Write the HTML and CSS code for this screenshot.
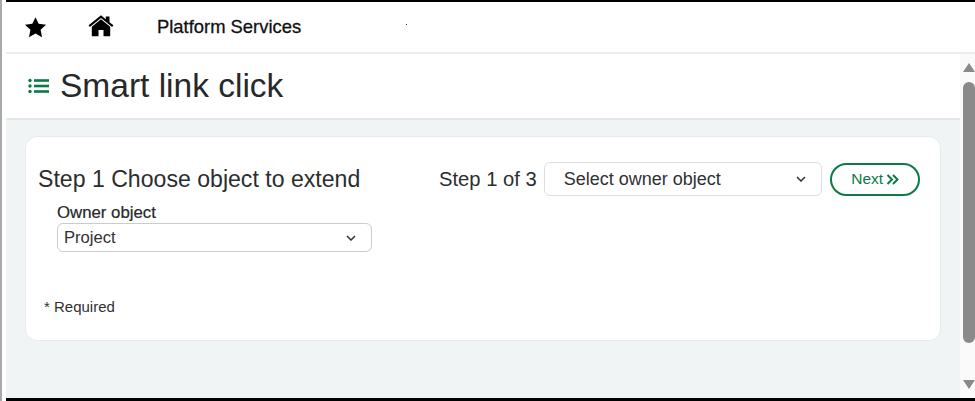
FILE: index.html
```html
<!DOCTYPE html>
<html lang="en">
<head>
<meta charset="utf-8">
<title>Smart link click</title>
<link rel="stylesheet" href="styles.css">
</head>
<body>
<div class="frame">
  <header class="topbar">
    <svg class="star" viewBox="0 0 24 24" aria-hidden="true"><path d="M12 1.200l3.300 7 7.700.9-5.700 5.300 1.500 7.700L12 18.300l-6.800 3.800 1.500-7.700L1 9.100l7.700-.9z"/></svg>
    <svg class="home" viewBox="0 0 26 22" aria-hidden="true"><path d="M13 4.200L3.800 11.700v8.700c0 .5.4.9.9.9h5.800v-6.300h5v6.300h5.800c.5 0 .9-.4.9-.9v-8.700z"/><path d="M.6 10.300L13 .3l4.800 3.900V1.500h3.700v5.700l3.900 3.100-1.300 1.700L13 2.900 1.900 12z"/></svg>
    <span class="brand">Platform Services</span>
    <span class="dot"></span>
  </header>
  <div class="body-row">
    <div class="content">
      <div class="titlebar">
        <svg class="list" viewBox="0 0 21 16" aria-hidden="true"><circle cx="2" cy="2.500" r="1.700"/><circle cx="2" cy="8" r="1.700"/><circle cx="2" cy="13.500" r="1.700"/><rect x="6" y="1.200" width="15" height="2.600"/><rect x="6" y="6.700" width="15" height="2.600"/><rect x="6" y="12.200" width="15" height="2.600"/></svg>
        <h1 class="title">Smart link click</h1>
      </div>
      <main class="main">
        <section class="card">
          <div class="step-row">
            <h2 class="step-title">Step 1 Choose object to extend</h2>
            <div class="wizard">
              <span class="step-count">Step 1 of 3</span>
              <div class="select select-step">
                <span>Select owner object</span>
                <svg class="chev" viewBox="0 0 10 6" aria-hidden="true"><path d="M1 1l4 4 4-4"/></svg>
              </div>
              <button class="next" type="button">Next
                <svg class="dbl" viewBox="0 0 13 11" aria-hidden="true"><path d="M1.500 1l4.500 4.500L1.500 10M7 1l4.500 4.500L7 10"/></svg>
              </button>
            </div>
          </div>
          <div class="field">
            <label class="field-label">Owner object</label>
            <div class="select select-owner">
              <span>Project</span>
              <svg class="chev" viewBox="0 0 10 6" aria-hidden="true"><path d="M1 1l4 4 4-4"/></svg>
            </div>
          </div>
          <p class="required">* Required</p>
        </section>
      </main>
    </div>
    <div class="scrollbar">
      <span class="arrow up"></span>
      <span class="thumb"></span>
      <span class="arrow down"></span>
    </div>
  </div>
</div>
</body>
</html>
```
FILE: styles.css
```css
* { box-sizing: border-box; }
html, body { margin: 0; height: 100%; overflow: hidden; }
body {
  background: #fff;
  font-family: "Liberation Sans", Arial, sans-serif;
  color: #26282a;
  border-left: 2px solid #a9a9a9;
  padding-left: 4px;
}
.frame {
  height: 401px;
  border-top: 2px solid #000;
  border-bottom: 3px solid #000;
  background: #fff;
  display: flex;
  flex-direction: column;
}
.topbar {
  height: 52px;
  flex: none;
  display: flex;
  align-items: center;
  border-bottom: 2px solid #e9edf0;
}
.star { width: 23px; height: 23px; margin-left: 18px; fill: #000; flex: none; }
.home { width: 26px; height: 22px; margin-left: 41px; fill: #000; margin-top: -3px; flex: none; }
.brand { margin-left: 43px; font-size: 18.400px; color: #111; -webkit-text-stroke: 0.3px #111; }
.dot { width: 1px; height: 1px; background: #333; margin-left: 105px; margin-top: -6px; }
.body-row { flex: 1; display: flex; min-height: 0; }
.content { flex: 1; display: flex; flex-direction: column; min-width: 0; }
.titlebar {
  height: 66px;
  flex: none;
  display: flex;
  align-items: center;
  border-bottom: 2px solid #e3e7ea;
  padding-left: 22px;
}
.list { width: 21px; height: 16px; fill: #0b7a43; }
.title { margin: 0 0 0 11px; font-size: 33.500px; font-weight: 400; line-height: 40px; color: #26282a; }
.main { flex: 1; background: #f1f4f5; padding: 16px 19px 0; }
.card {
  height: 205px;
  background: #fff;
  border: 1px solid #e8ebed;
  border-radius: 12px;
  padding: 25px 0 0 12px;
}
.step-row { display: flex; align-items: center; height: 34px; }
.step-title { margin: 0; font-size: 23.100px; font-weight: 400; line-height: 34px; color: #2b2d2f; width: 401px; flex: none; }
.wizard { display: flex; align-items: center; }
.step-count { font-size: 20.200px; margin-right: 7px; color: #2b2d2f; }
.select {
  display: flex;
  align-items: center;
  justify-content: space-between;
  background: #fff;
  border: 1px solid #dcdfe2;
  border-radius: 6px;
  color: #2f3133;
}
.select-step { width: 278px; height: 34px; padding: 0 15px 0 19px; font-size: 18px; }
.select-owner { width: 315px; height: 29px; margin-top: 1px; padding: 0 15px 0 6px; font-size: 16.600px; border-color: #c9cdd0; }
.chev { width: 10px; height: 6px; fill: none; stroke: #2f3133; stroke-width: 1.500; }
.next {
  margin-left: 8px;
  width: 90px;
  height: 33px;
  border: 2px solid #0b7a43;
  border-radius: 17px;
  background: #fff;
  color: #0b7a43;
  font: 15.500px "Liberation Sans", Arial, sans-serif;
  display: flex;
  align-items: center;
  justify-content: center;
  gap: 3px;
  padding: 0 0 0 1px;
}
.dbl { width: 13px; height: 11px; fill: none; stroke: #0b7a43; stroke-width: 2; }
.field { margin: 7px 0 0 19px; }
.field-label { display: block; font-size: 16.800px; line-height: 19px; color: #26282a; -webkit-text-stroke: 0.2px #26282a; }
.required { margin: 46px 0 0 6px; font-size: 15px; line-height: 18px; color: #2f3133; }
.scrollbar {
  width: 15px;
  flex: none;
  background: #fafafa;
  display: flex;
  flex-direction: column;
  align-items: flex-end;
}
.thumb { width: 12px; height: 261px; background: #8a8a8a; border-radius: 6px; margin-top: 10px; }
.arrow { width: 0; height: 0; border-left: 6px solid transparent; border-right: 6px solid transparent; }
.arrow.up { border-bottom: 9px solid #8a8a8a; margin-top: 9px; }
.arrow.down { border-top: 9px solid #8a8a8a; margin-top: auto; margin-bottom: 9px; }
```
